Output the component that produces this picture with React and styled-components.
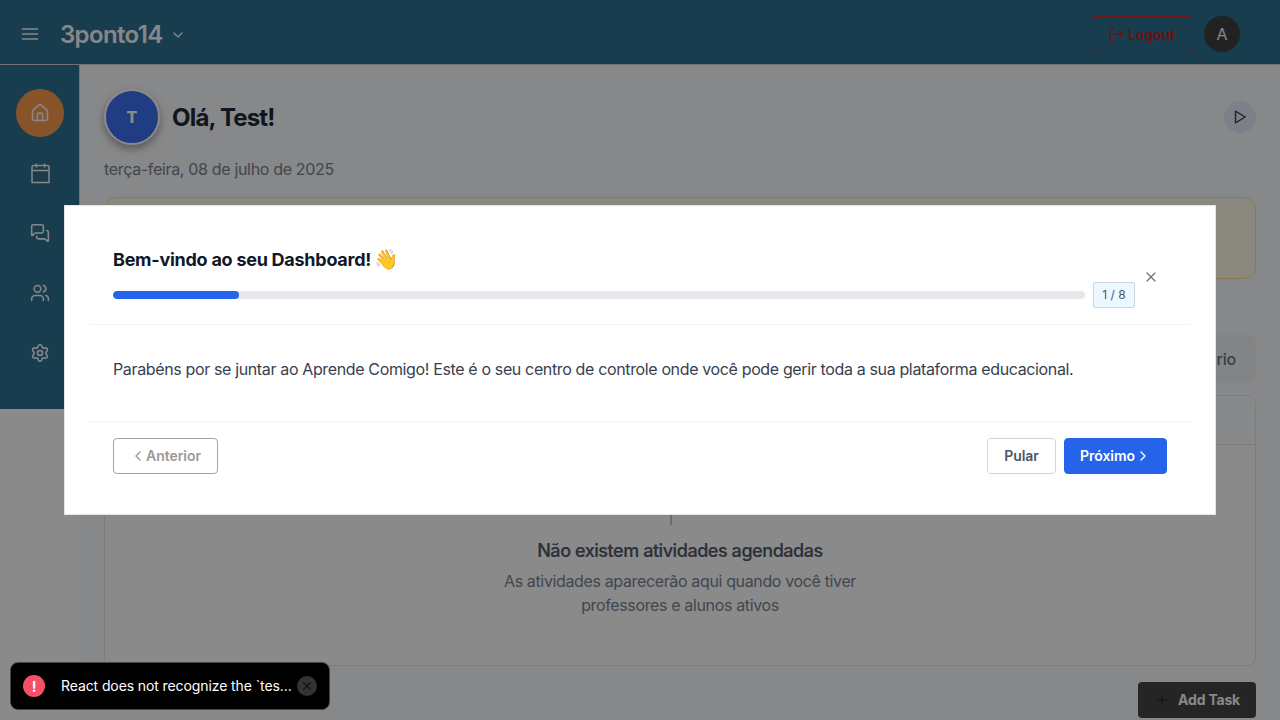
import React from "react";
import styled, { createGlobalStyle } from "styled-components";
import { House, MessagesSquare, Users, Settings, X, ChevronDown, ChevronLeft, ChevronRight, Plus } from "lucide-react";

const Global = createGlobalStyle`
  * { box-sizing: border-box; }
  html, body { margin: 0; height: 100%; overflow: hidden; background: #fff; }
  body { font-family: Inter, "Liberation Sans", sans-serif; -webkit-font-smoothing: antialiased; }
  button { font-family: inherit; margin: 0; }
  svg { display: block; flex: none; }
`;

const Page = styled.div`
  width: 1280px; height: 720px; overflow: hidden; position: relative;
  display: flex; flex-direction: column;
`;
const Header = styled.header`
  height: 65px; flex: none; background: #2c7192; border-bottom: 1px solid #d3d3d3;
  display: flex; align-items: center; padding: 4px 40px 0 20px; color: #fafafa;
`;
const School = styled.div`
  margin-left: 20px; display: flex; align-items: center; gap: 7px; padding-top: 2px;
  font-size: 24px; font-weight: 600; letter-spacing: -0.65px; line-height: 32px;
`;
const Spacer = styled.div`flex: 1;`;
const LogoutButton = styled.button`
  width: 101px; height: 36px; border: 1px solid #dc2626; border-radius: 4px; background: transparent;
  color: #c81e1e; font-size: 14px; font-weight: 600; display: flex; align-items: center; justify-content: center; gap: 4px; padding: 0;
`;
const UserBadge = styled.div`
  width: 36px; height: 36px; border-radius: 50%; margin-left: 12px; background: #404040;
  display: flex; align-items: center; justify-content: center; font-size: 16px;
`;
const Body = styled.div`flex: 1; min-height: 0; display: flex; align-items: flex-start;`;
const Sidebar = styled.nav`
  width: 80px; flex: none; height: 344px; background: #2c7192; border-right: 1px solid #d3d3d3;
  display: flex; flex-direction: column; align-items: center; gap: 12px; padding-top: 24px;
`;
const NavItem = styled.div`
  width: 48px; height: 48px; border-radius: 50%; color: #fafafa;
  background: ${(p) => (p.$active ? "#fa9a4b" : "transparent")};
  display: flex; align-items: center; justify-content: center;
`;
const Main = styled.main`
  flex: 1; height: 655px; overflow: hidden; background: #fafbfd; padding: 24px;
  display: flex; flex-direction: column;
`;
const Greeting = styled.div`display: flex; align-items: center; height: 56px; flex: none;`;
const Avatar = styled.div`
  width: 56px; height: 56px; border-radius: 50%; background: #3b6ff0; border: 2px solid #fff;
  box-shadow: 0 4px 8px rgba(0,0,0,.35); color: #fff; font-weight: 800; font-size: 16px;
  display: flex; align-items: center; justify-content: center;
`;
const Hello = styled.h1`
  margin: 0 0 0 12px; padding-top: 2px; font-size: 24px; line-height: 32px; font-weight: 700; color: #1f2937; letter-spacing: -0.8px;
`;
const PlayButton = styled.div`
  width: 32px; height: 32px; border-radius: 50%; background: #e6edfd; color: #444;
  display: flex; align-items: center; justify-content: center;
`;
const DateLine = styled.div`
  margin-top: 12px; height: 24px; line-height: 24px; font-size: 16px; color: #7b8290; letter-spacing: -0.33px; flex: none;
`;
const Banner = styled.div`
  margin-top: 16px; height: 82px; flex: none; border: 1px solid #fde68a; border-radius: 12px; background: #fffbeb;
`;
const Tabs = styled.div`
  margin-top: 56px; height: 48px; flex: none; border-radius: 8px; background: #f3f4f6;
  display: flex; align-items: center; justify-content: flex-end; padding-right: 20px;
  font-size: 16px; font-weight: 500; color: #6b7280; letter-spacing: -0.2px;
`;
const Card = styled.section`
  margin-top: 12px; height: 271px; flex: none; border: 1px solid #e5e7eb; border-radius: 8px; background: #fff; overflow: hidden;
`;
const CardHead = styled.div`height: 49px; background: #fafbfd; border-bottom: 1px solid #e5e7eb;`;
const Empty = styled.div`
  display: flex; flex-direction: column; align-items: center; padding-top: 32px; text-align: center; color: #7b8290;
`;
const EmptyTitle = styled.div`
  margin-top: 12px; font-size: 18px; line-height: 28px; font-weight: 500; color: #4f5968; letter-spacing: -0.44px;
  -webkit-text-stroke: 0.2px #4f5968;
`;
const EmptyText = styled.div`
  margin-top: 4px; font-size: 16px; line-height: 24px; letter-spacing: -0.36px;
`;
const AddTask = styled.button`
  align-self: flex-end; margin-top: 16px; width: 118px; height: 36px; flex: none; border: 0; border-radius: 4px;
  background: #454545; color: #fafafa; font-size: 14px; font-weight: 700;
  display: flex; align-items: center; justify-content: flex-end; gap: 8px; padding: 0 16px 1px 0; letter-spacing: -0.2px;
`;
const Overlay = styled.div`
  position: absolute; inset: 0; background: rgba(0,0,0,.46);
  display: flex; align-items: center; justify-content: center;
`;
const Modal = styled.div`
  width: 1152px; height: 310px; background: #fff; border: 1px solid #e5e5e5; padding: 24px;
  display: flex; flex-direction: column;
`;
const ModalHead = styled.div`
  height: 95px; padding: 16px 24px; border-bottom: 1px solid #f3f4f6; display: flex; align-items: center;
`;
const ModalInfo = styled.div`flex: 1; display: flex; flex-direction: column; gap: 8px;`;
const ModalTitle = styled.h2`
  margin: 0; height: 28px; font-size: 18px; line-height: 28px; font-weight: 700; color: #111827; letter-spacing: -0.26px;
  display: flex; align-items: center; gap: 3px;
`;
const Emoji = styled.span`font-size: 19.5px; letter-spacing: 0; padding-bottom: 2px;`;
const ProgressRow = styled.div`display: flex; align-items: center; gap: 8px; height: 26px;`;
const Track = styled.div`flex: 1; height: 8px; border-radius: 4px; background: #e5e7eb; overflow: hidden;`;
const Fill = styled.div`width: 13%; height: 8px; border-radius: 4px; background: #2563eb;`;
const StepBadge = styled.div`
  width: 42px; height: 26px; border: 1px solid #d1d5db; border-radius: 2px; background: #ecf8ff; padding-bottom: 1px;
  font-size: 12px; color: #4b5563; display: flex; align-items: center; justify-content: center;
`;
const CloseButton = styled.div`
  width: 32px; height: 32px; display: flex; align-items: center; justify-content: center; color: #6b7280;
`;
const ModalText = styled.p`
  margin: 0; height: 96px; padding: 31px 24px; font-size: 16px; line-height: 26px; color: #374151; letter-spacing: -0.36px; white-space: nowrap;
`;
const ModalFoot = styled.div`
  border-top: 1px solid #f3f4f6; padding: 16px 24px; display: flex; gap: 8px;
`;
const Button = styled.button`
  width: ${(p) => p.$w}px; height: 36px; border-radius: 4px; font-size: 14px; font-weight: 600; padding: 0;
  border: 1px solid ${(p) => (p.$primary ? "#2563eb" : p.$muted ? "#a3a3a3" : "#d1d5db")};
  background: ${(p) => (p.$primary ? "#2563eb" : "#fff")};
  color: ${(p) => (p.$primary ? "#fff" : p.$muted ? "#999" : "#4b5563")};
  display: flex; align-items: center; justify-content: center; letter-spacing: -0.05px;
`;
const Label = styled.span`padding-bottom: 1px;`;
const Toast = styled.div`
  position: absolute; left: 10px; top: 662px; width: 320px; height: 48px; border-radius: 8px; background: #000;
  border: 1px solid #464646; color: #fff; font-size: 14px; display: flex; align-items: center; padding: 0 12px;
`;
const Alert = styled.div`
  width: 22px; height: 22px; border-radius: 50%; background: #f55066; font-weight: 700; font-size: 14px;
  display: flex; align-items: center; justify-content: center;
`;
const ToastText = styled.div`margin-left: 16px; width: 236px; padding-bottom: 2px; white-space: nowrap; letter-spacing: -0.1px;`;
const ToastClose = styled.div`
  width: 20px; height: 20px; border-radius: 50%; background: #333; color: #111;
  display: flex; align-items: center; justify-content: center;
`;

const MenuIcon = () => (
  <svg width="20" height="20" viewBox="0 0 24 24" fill="none" stroke="currentColor" strokeWidth="2" strokeLinecap="round">
    <path d="M3 6h18M3 12h18M3 18h18" />
  </svg>
);
const CalendarIcon = () => (
  <svg width="22" height="24" viewBox="0 0 22 24" fill="none" stroke="currentColor" strokeWidth="1.5">
    <path d="M4.500 4.500H18.500a1.500 1.500 0 0 1 1.500 1.500V21.500H3V6a1.500 1.500 0 0 1 1.500-1.500zM3 9.500H20M7.500 2.500v4M15.500 2.500v4" />
  </svg>
);
const PlayIcon = () => (
  <svg width="16" height="16" viewBox="0 0 16 16" fill="none" stroke="currentColor" strokeWidth="1.4">
    <path d="M3.500 2.200 13.200 8 3.500 13.800z" strokeLinejoin="round" />
  </svg>
);
const LogoutIcon = () => (
  <svg width="16" height="16" viewBox="0 0 16 16" fill="none" stroke="currentColor" strokeWidth="1.4">
    <path d="M6 1.500H3.500A1.500 1.500 0 0 0 2 3v10A1.500 1.500 0 0 0 3.500 14.500H6M6 8H14.500M11 4.500 14.500 8 11 11.500" />
  </svg>
);

export default function App() {
  return (
    <Page>
      <Global />
      <Header>
        <MenuIcon />
        <School>3ponto14 <ChevronDown size={16} strokeWidth={2} /></School>
        <Spacer />
        <LogoutButton><LogoutIcon />Logout</LogoutButton>
        <UserBadge>A</UserBadge>
      </Header>
      <Body>
        <Sidebar>
          <NavItem $active><House size={20} strokeWidth={1.9} /></NavItem>
          <NavItem><CalendarIcon /></NavItem>
          <NavItem><MessagesSquare size={20} strokeWidth={1.9} /></NavItem>
          <NavItem><Users size={20} strokeWidth={1.9} /></NavItem>
          <NavItem><Settings size={20} strokeWidth={1.9} /></NavItem>
        </Sidebar>
        <Main>
          <Greeting>
            <Avatar>T</Avatar>
            <Hello>Olá, Test!</Hello>
            <Spacer />
            <PlayButton><PlayIcon /></PlayButton>
          </Greeting>
          <DateLine>terça-feira, 08 de julho de 2025</DateLine>
          <Banner />
          <Tabs>Calendário</Tabs>
          <Card>
            <CardHead />
            <Empty>
              <svg width="48" height="48" viewBox="0 0 48 48" fill="none" stroke="#c8cad2" strokeWidth="2">
                <path d="M15 4v9M33 4v9M6 8h36v22H6zM6 19h36M15 30v18" />
              </svg>
              <EmptyTitle>Não existem atividades agendadas</EmptyTitle>
              <EmptyText>As atividades aparecerão aqui quando você tiver<br />professores e alunos ativos</EmptyText>
            </Empty>
          </Card>
          <AddTask><Plus size={16} color="#2c2c2c" />Add Task</AddTask>
        </Main>
      </Body>
      <Overlay>
        <Modal>
          <ModalHead>
            <ModalInfo>
              <ModalTitle>Bem-vindo ao seu Dashboard! <Emoji>👋</Emoji></ModalTitle>
              <ProgressRow><Track><Fill /></Track><StepBadge>1 / 8</StepBadge></ProgressRow>
            </ModalInfo>
            <CloseButton><X size={16} strokeWidth={1.8} /></CloseButton>
          </ModalHead>
          <ModalText>Parabéns por se juntar ao Aprende Comigo! Este é o seu centro de controle onde você pode gerir toda a sua plataforma educacional.</ModalText>
          <ModalFoot>
            <Button $w={105} $muted><ChevronLeft size={16} /><Label>Anterior</Label></Button>
            <Spacer />
            <Button $w={69}><Label>Pular</Label></Button>
            <Button $w={103} $primary><Label>Próximo</Label><ChevronRight size={16} /></Button>
          </ModalFoot>
        </Modal>
      </Overlay>
      <Toast>
        <Alert>!</Alert>
        <ToastText>React does not recognize the `tes...</ToastText>
        <ToastClose><X size={14} /></ToastClose>
      </Toast>
    </Page>
  );
}
